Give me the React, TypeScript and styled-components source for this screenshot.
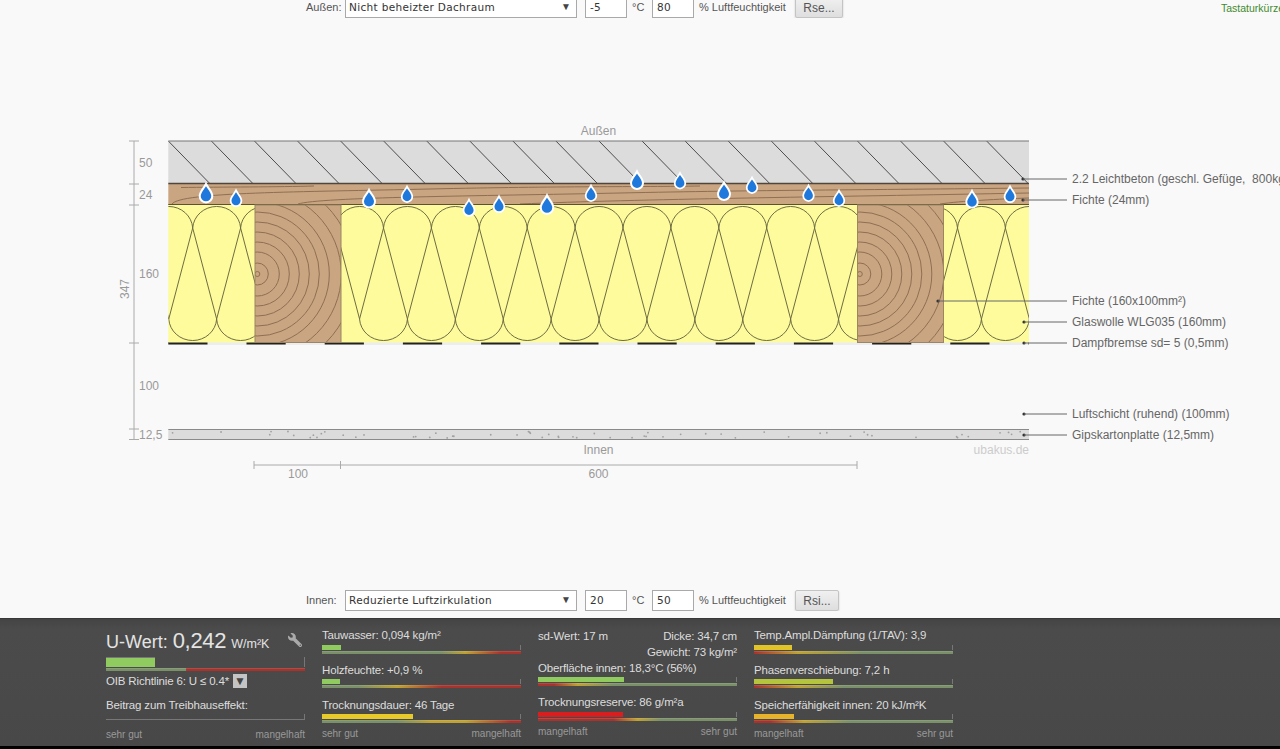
import React from 'react';
import styled, { createGlobalStyle } from 'styled-components';
import { FaWrench } from 'react-icons/fa';

const GlobalStyle = createGlobalStyle`
  html, body { margin: 0; padding: 0; background: #f9f9f9; overflow: hidden; }
  body { font-family: "Liberation Sans", Arial, sans-serif; }
`;

const Page = styled.div`
  width: 1280px;
  height: 749px;
  display: flex;
  flex-direction: column;
  overflow: hidden;
  background: #f9f9f9;
`;

const Toolbar = styled.div<{ $height: number }>`
  height: ${(p) => p.$height}px;
  flex: none;
  display: flex;
  align-items: flex-end;
  padding-left: 306px;
  overflow: hidden;
  font-size: 11px;
  color: #555;
  white-space: nowrap;
`;

const FieldLabel = styled.span`
  width: 39px;
  line-height: 18px;
  margin-bottom: 2px;
`;

const SelectWrap = styled.div`
  position: relative;
  flex: none;
  width: 232px;
  height: 21px;
  margin-right: 8px;
  &::after {
    content: '▼';
    position: absolute;
    right: 6px;
    top: 4px;
    font-size: 10px;
    color: #444;
    pointer-events: none;
  }
`;

const Select = styled.select`
  appearance: none;
  box-sizing: border-box;
  width: 100%;
  height: 100%;
  padding: 0 0 2px 3px;
  border: 1px solid #a9a9a9;
  border-radius: 0;
  background: #fff;
  font-family: "DejaVu Sans", sans-serif;
  font-size: 10.5px;
  letter-spacing: 0.33px;
  color: #333;
  outline: none;
`;

const NumberInput = styled.input`
  box-sizing: border-box;
  flex: none;
  width: 42px;
  height: 21px;
  padding: 0 0 2px 4px;
  border: 1px solid #a9a9a9;
  background: #fff;
  font-family: "DejaVu Sans", sans-serif;
  font-size: 10.5px;
  letter-spacing: 0.33px;
  color: #333;
  outline: none;
`;

const Unit = styled.span<{ $width: number }>`
  width: ${(p) => p.$width}px;
  padding-left: 5px;
  margin-bottom: 2px;
  box-sizing: border-box;
  line-height: 18px;
`;

const ResistanceButton = styled.button<{ $width: number }>`
  box-sizing: border-box;
  flex: none;
  width: ${(p) => p.$width}px;
  height: 21px;
  padding: 0;
  border: 1px solid #c4c4c4;
  border-radius: 2px;
  background: linear-gradient(#f0f0f0, #dedede);
  box-shadow: 0 1px 2px rgba(0, 0, 0, 0.2);
  font-family: "Liberation Sans", sans-serif;
  font-size: 12px;
  color: #555;
`;

const Shortcuts = styled.span`
  margin-left: auto;
  margin-right: -13px;
  width: 72px;
  line-height: 16px;
  margin-bottom: 2px;
  color: #3f8a2e;
  font-size: 10.5px;
`;

const Drawing = styled.svg`
  display: block;
  flex: none;
`;

const DimText = styled.text`
  font-size: 12px;
  fill: #999;
`;

const LayerText = styled.text`
  font-size: 12px;
  fill: #666;
  white-space: pre;
`;

const Spacer = styled.div`
  height: 7px;
  flex: none;
`;

const Panel = styled.div`
  box-sizing: border-box;
  height: 128px;
  flex: none;
  padding: 0 0 0 106px;
  display: grid;
  grid-template-columns: repeat(4, 199px);
  column-gap: 17px;
  background: linear-gradient(#444 0, #4b4b4b 10px, #484848 100%);
  border-top: 1px solid #383838;
  color: #ddd;
  font-size: 11.5px;
  letter-spacing: -0.16px;
`;

const Footer = styled.div`
  height: 3px;
  flex: none;
  background: #000;
`;

const Column = styled.div`
  display: flex;
  flex-direction: column;
  height: 127px;
  padding-top: 9px;
  box-sizing: border-box;
`;

const Metric = styled.div`
  display: flex;
  flex-direction: column;
  flex: none;
  height: 34.75px;
`;

const Caption = styled.div`
  height: 14px;
  line-height: 14px;
  white-space: nowrap;
`;

const Meter = styled.div`
  margin-top: 2.5px;
  box-sizing: border-box;
  border-right: 1px solid #777;
  height: 5px;
  display: flex;
  flex-direction: column;
  justify-content: flex-end;
`;

const Fill = styled.div<{ $color: string }>`
  height: 5px;
  background: ${(p) => p.$color};
`;

const Scale = styled.div<{ $stops: string }>`
  height: 3px;
  margin-top: 1px;
  background: linear-gradient(to right, ${(p) => p.$stops});
  border-top: 1px solid rgba(255, 255, 255, 0.12);
  box-sizing: border-box;
`;

const ScaleEnds = styled.div<{ $pull?: number }>`
  display: flex;
  justify-content: space-between;
  flex: none;
  margin-top: ${(p) => (p.$pull === undefined ? 'auto' : `${p.$pull}px`)};
  margin-bottom: 5px;
  font-size: 10px;
  line-height: 12px;
  letter-spacing: 0;
  color: #999;
`;

const UHeading = styled.div`
  display: flex;
  align-items: baseline;
  flex: none;
  height: 24px;
  font-size: 18px;
  letter-spacing: 0;
  color: #e4e4e4;
  white-space: nowrap;
`;

const UValue = styled.span`
  font-size: 22px;
  letter-spacing: -0.3px;
  margin-left: 5px;
`;

const UUnit = styled.span`
  font-size: 12.5px;
  margin-left: 5px;
`;

const WrenchButton = styled.span`
  margin-left: auto;
  margin-right: 3px;
  color: #aaa;
  align-self: center;
  display: flex;
  transform: scaleX(-1);
`;

const UMeter = styled(Meter)`
  height: 10px;
  margin-top: 5px;
`;

const UFill = styled(Fill)`
  height: 10px;
  border-top: 1px solid #777;
  box-sizing: border-box;
`;

const NormRow = styled.div`
  display: flex;
  align-items: center;
  gap: 4px;
  height: 16px;
  margin-top: 2px;
`;

const NormToggle = styled.span`
  width: 14px;
  height: 14px;
  background: #c4c4c4;
  color: #444;
  font-size: 12px;
  line-height: 14px;
  text-align: center;
`;

const Greenhouse = styled.div`
  margin-top: 10px;
`;

const EmptyMeter = styled.div`
  margin-top: 3px;
  height: 5px;
  border-right: 1px solid #777;
  border-bottom: 1px solid #777;
`;

const StatsTop = styled.div`
  height: 32.5px;
  flex: none;
  display: flex;
  justify-content: space-between;
  line-height: 16px;
`;

const StatsRight = styled.div`
  text-align: right;
`;

type MetricData = { label: string; value: number; color: string; stops: string };

const GOOD = '#7a9068';
const BAD = '#a8322c';
const MID = '#bfa232';

const colTwo: MetricData[] = [
  { label: 'Tauwasser: 0,094 kg/m²', value: 9.5, color: '#8fcb5e', stops: `${GOOD} 0%, ${GOOD} 60%, ${MID} 72%, ${BAD} 90%, ${BAD} 100%` },
  { label: 'Holzfeuchte: +0,9 %', value: 9, color: '#8fcb5e', stops: `${GOOD} 0%, ${GOOD} 18%, ${MID} 38%, ${BAD} 60%, ${BAD} 100%` },
  { label: 'Trocknungsdauer: 46 Tage', value: 46, color: '#e8c92a', stops: `${GOOD} 0%, ${GOOD} 38%, ${MID} 55%, ${MID} 72%, ${BAD} 95%` },
];

const colThree: MetricData[] = [
  { label: 'Oberfläche innen: 18,3°C (56%)', value: 43.5, color: '#8fcb5e', stops: `${BAD} 0%, ${BAD} 8%, ${MID} 20%, ${GOOD} 38%, ${GOOD} 100%` },
  { label: 'Trocknungsreserve: 86 g/m²a', value: 43, color: '#d81e1e', stops: `${BAD} 0%, ${BAD} 38%, ${MID} 50%, ${GOOD} 62%, ${GOOD} 100%` },
];

const colFour: MetricData[] = [
  { label: 'Temp.Ampl.Dämpfung (1/TAV): 3,9', value: 19, color: '#e0c428', stops: `${BAD} 0%, ${MID} 22%, ${GOOD} 55%, ${GOOD} 100%` },
  { label: 'Phasenverschiebung: 7,2 h', value: 40, color: '#b4c43c', stops: `${BAD} 0%, ${MID} 22%, ${GOOD} 45%, ${GOOD} 100%` },
  { label: 'Speicherfähigkeit innen: 20 kJ/m²K', value: 20, color: '#e6b32a', stops: `${BAD} 0%, ${BAD} 8%, ${MID} 25%, ${GOOD} 48%, ${GOOD} 100%` },
];

const MetricRow = ({ m }: { m: MetricData }) => (
  <Metric>
    <Caption>{m.label}</Caption>
    <Meter>
      <Fill $color={m.color} style={{ width: `${m.value}%` }} />
    </Meter>
    <Scale $stops={m.stops} />
  </Metric>
);

// drawing coordinates
const LEFT = 168.3;
const RIGHT = 1029;
const WOOD = '#c9a582';
const GRAIN = '#8f6f52';

const hatchLines = Array.from({ length: 20 }, (_, i) => LEFT + 43.07 * i);

const woolPath = (firstTopCrossing: number, count: number) => {
  // firstTopCrossing: x where two upper lobes meet
  const step = 47.9;
  const topY = 228;
  const botY = 319;
  let d = '';
  for (let i = -1; i < count; i++) {
    const a = firstTopCrossing + step * i;
    const b = a + step;
    d += `M${a},${topY} A24,23 0 0 1 ${b},${topY} `;
    d += `M${a + step / 2},${botY} A24,23 0 0 0 ${b + step / 2},${botY} `;
    d += `M${a},${topY} L${a + step / 2},${botY} L${b},${topY} `;
  }
  return d;
};

const ringRadii = [11, 22, 32, 42, 52, 62, 72, 84, 97, 110];

const Rings = ({ cx }: { cx: number }) => (
  <g fill="none" stroke={GRAIN} strokeWidth="1">
    <circle cx={cx} cy={274} r={2.5} />
    {ringRadii.map((r) => (
      <circle key={r} cx={cx} cy={274} r={r} />
    ))}
  </g>
);

const grainLines = [
  'M181,187.5 C220,187 280,187 314,186',
  'M172,204 C180,192 300,192 430,189 C560,186 640,187 700,186',
  'M298,204 C320,197 480,196 620,193 C760,190 860,190 1029,188',
  'M520,204 C640,199 820,197 1029,193',
  'M940,204 C960,201 1000,199 1029,198',
];

const drops: [number, number, number][] = [
  [206, 194, 1.05], [236, 199, 0.9], [369, 199.5, 1], [407, 195, 0.88],
  [469, 208.5, 0.92], [499, 205, 0.9], [547, 205.5, 1.05], [591, 194, 0.88],
  [637, 181, 1], [680, 181.5, 0.88], [724, 192, 1], [752, 186, 0.88],
  [808.5, 194, 0.88], [839, 199, 0.88], [972, 200, 0.95], [1010, 195, 0.9],
];

const Drop = ({ x, y, s }: { x: number; y: number; s: number }) => (
  <g transform={`translate(${x} ${y}) scale(${s})`}>
    <path
      d="M0,-9.5 C1.5,-6 6,-2.5 6,2 A6,6 0 1 1 -6,2 C-6,-2.5 -1.5,-6 0,-9.5 Z"
      fill="#1f78dc"
      stroke="#fff"
      strokeWidth="2"
    />
  </g>
);

const hash = (n: number) => {
  const v = Math.sin(n * 12.9898) * 43758.5453;
  return v - Math.floor(v);
};

const speckles = Array.from({ length: 60 }, (_, i) => ({
  x: LEFT + 4 + hash(i + 1) * 852,
  y: 431.5 + hash(i + 101) * 6.5,
}));

const labels: { text: string; y: number; dotX: number }[] = [
  { text: '2.2 Leichtbeton (geschl. Gefüge,  800kg/m³)', y: 179, dotX: 1023 },
  { text: 'Fichte (24mm)', y: 200, dotX: 1023 },
  { text: 'Fichte (160x100mm²)', y: 301, dotX: 938 },
  { text: 'Glaswolle WLG035 (160mm)', y: 322, dotX: 1024 },
  { text: 'Dampfbremse sd= 5 (0,5mm)', y: 343, dotX: 1024 },
  { text: 'Luftschicht (ruhend) (100mm)', y: 414, dotX: 1024 },
  { text: 'Gipskartonplatte (12,5mm)', y: 435, dotX: 1024 },
];

const leftDims: [string, number][] = [
  ['50', 167], ['24', 199], ['160', 278], ['100', 390], ['12,5', 439],
];

const Construction = () => (
  <Drawing width="1280" height="572" viewBox="0 18 1280 572">
    <defs>
      <clipPath id="concrete">
        <rect x={LEFT} y={141} width={RIGHT - LEFT} height={43} />
      </clipPath>
      <clipPath id="plank">
        <rect x={LEFT} y={184} width={RIGHT - LEFT} height={21} />
      </clipPath>
      <clipPath id="wool1"><rect x={LEFT} y={205} width={87} height={138} /></clipPath>
      <clipPath id="wool2"><rect x={341} y={205} width={517} height={138} /></clipPath>
      <clipPath id="wool3"><rect x={943} y={205} width={86} height={138} /></clipPath>
      <clipPath id="stud1"><rect x={255} y={205} width={86} height={138} /></clipPath>
      <clipPath id="stud2"><rect x={857.5} y={205} width={86} height={138} /></clipPath>
    </defs>

    {/* concrete */}
    <rect x={LEFT} y={141} width={RIGHT - LEFT} height={43} fill="#dcdcdc" />
    <g clipPath="url(#concrete)" stroke="#4c4c4c" strokeWidth="1">
      {hatchLines.map((x) => (
        <line key={x} x1={x} y1={141} x2={x + 42} y2={184} />
      ))}
    </g>
    <line x1={LEFT} y1={141} x2={RIGHT} y2={141} stroke="#777" strokeWidth="1.2" />

    {/* plank */}
    <rect x={LEFT} y={184} width={RIGHT - LEFT} height={21} fill={WOOD} />
    <g clipPath="url(#plank)" fill="none" stroke={GRAIN} strokeWidth="1">
      {grainLines.map((d) => (
        <path key={d} d={d} />
      ))}
    </g>
    <line x1={LEFT} y1={183.5} x2={RIGHT} y2={183.5} stroke="#4f463c" strokeWidth="1.5" />
    <line x1={LEFT} y1={204.5} x2={RIGHT} y2={204.5} stroke="#5c5036" strokeWidth="1" />

    {/* vapour barrier */}
    <rect x={LEFT} y={342} width={RIGHT - LEFT} height={3} fill="#ecedf2" />
    <line x1={LEFT} y1={343.3} x2={RIGHT} y2={343.3} stroke="#222" strokeWidth="2.4" strokeDasharray="39.2 39" />

    {/* insulation */}
    <rect x={LEFT} y={205} width={RIGHT - LEFT} height={137.5} fill="#fdfb9c" />
    <g fill="none" stroke="#6f6c42" strokeWidth="1">
      <path clipPath="url(#wool1)" d={woolPath(192.7, 3)} />
      <path clipPath="url(#wool2)" d={woolPath(383.5, 11)} />
      <path clipPath="url(#wool3)" d={woolPath(957.5, 3)} />
    </g>

    {/* studs */}
    {[255, 857.5].map((x, i) => (
      <g key={x}>
        <rect x={x} y={205} width={86} height={137.5} fill={WOOD} />
        <g clipPath={`url(#stud${i + 1})`}>
          <Rings cx={x + 2.3} />
        </g>
        <rect x={x} y={205} width={86} height={137.5} fill="none" stroke="#9c8660" strokeWidth="1" />
      </g>
    ))}

    {drops.map(([x, y, s]) => (
      <Drop key={`${x}-${y}`} x={x} y={y} s={s} />
    ))}

    {/* plasterboard */}
    <rect x={LEFT} y={429.5} width={RIGHT - LEFT} height={10} fill="#dcdcdc" />
    <line x1={LEFT} y1={429.5} x2={RIGHT} y2={429.5} stroke="#8a8a8a" />
    <line x1={LEFT} y1={439.5} x2={RIGHT} y2={439.5} stroke="#8a8a8a" />
    {speckles.map((p) => (
      <circle key={`${p.x}`} cx={p.x} cy={p.y} r={0.9} fill="#a0a0a0" />
    ))}

    {/* dimensions */}
    <g stroke="#aaa" strokeWidth="1">
      <line x1={134} y1={141} x2={134} y2={439.5} />
      {[141, 184, 205, 343, 429, 439.5].map((y) => (
        <line key={y} x1={129} y1={y} x2={139} y2={y} />
      ))}
      <line x1={254} y1={465} x2={857} y2={465} />
      {[254, 340.5, 857].map((x) => (
        <line key={x} x1={x} y1={461} x2={x} y2={469} />
      ))}
    </g>
    {leftDims.map(([t, y]) => (
      <DimText key={t} x={139} y={y}>{t}</DimText>
    ))}
    <DimText x={129} y={289} transform="rotate(-90 129 289)" textAnchor="middle">347</DimText>
    <DimText x={298} y={478} textAnchor="middle">100</DimText>
    <DimText x={598.5} y={478} textAnchor="middle">600</DimText>
    <DimText x={598.5} y={135} textAnchor="middle">Außen</DimText>
    <DimText x={598.5} y={454} textAnchor="middle">Innen</DimText>
    <DimText x={1029} y={454} textAnchor="end" style={{ fill: '#ccc' }}>ubakus.de</DimText>

    {/* layer labels */}
    {labels.map((l) => (
      <g key={l.text}>
        <circle cx={l.dotX} cy={l.y} r={1.6} fill="#333" />
        <line x1={l.dotX} y1={l.y} x2={1067} y2={l.y} stroke="#666" />
        <LayerText x={1072} y={l.y + 4}>{l.text}</LayerText>
      </g>
    ))}
  </Drawing>
);

const App = () => (
  <Page>
    <GlobalStyle />
    <Toolbar $height={18}>
      <FieldLabel>Außen:</FieldLabel>
      <SelectWrap>
        <Select defaultValue="Nicht beheizter Dachraum">
          <option>Nicht beheizter Dachraum</option>
        </Select>
      </SelectWrap>
      <NumberInput defaultValue="-5" />
      <Unit $width={25}>°C</Unit>
      <NumberInput defaultValue="80" />
      <Unit $width={101}>% Luftfeuchtigkeit</Unit>
      <ResistanceButton $width={48}>Rse...</ResistanceButton>
      <Shortcuts>Tastaturkürzel</Shortcuts>
    </Toolbar>

    <Construction />

    <Toolbar $height={21}>
      <FieldLabel>Innen:</FieldLabel>
      <SelectWrap>
        <Select defaultValue="Reduzierte Luftzirkulation">
          <option>Reduzierte Luftzirkulation</option>
        </Select>
      </SelectWrap>
      <NumberInput defaultValue="20" />
      <Unit $width={25}>°C</Unit>
      <NumberInput defaultValue="50" />
      <Unit $width={101}>% Luftfeuchtigkeit</Unit>
      <ResistanceButton $width={44}>Rsi...</ResistanceButton>
    </Toolbar>
    <Spacer />

    <Panel>
      <Column>
        <UHeading>
          U-Wert:<UValue>0,242</UValue><UUnit>W/m²K</UUnit>
          <WrenchButton><FaWrench size={14} /></WrenchButton>
        </UHeading>
        <UMeter>
          <UFill $color="#8fcb5e" style={{ width: '24.5%' }} />
        </UMeter>
        <Scale $stops={`${GOOD} 0%, ${GOOD} 40%, ${BAD} 40.5%, ${BAD} 100%`} />
        <NormRow>
          OIB Richtlinie 6: U ≤ 0.4*
          <NormToggle>▼</NormToggle>
        </NormRow>
        <Greenhouse>Beitrag zum Treibhauseffekt:</Greenhouse>
        <EmptyMeter />
        <ScaleEnds><span>sehr gut</span><span>mangelhaft</span></ScaleEnds>
      </Column>

      <Column>
        {colTwo.map((m) => <MetricRow key={m.label} m={m} />)}
        <ScaleEnds $pull={-4.25}><span>sehr gut</span><span>mangelhaft</span></ScaleEnds>
      </Column>

      <Column>
        <StatsTop>
          <span>sd-Wert: 17 m</span>
          <StatsRight>Dicke: 34,7 cm<br />Gewicht: 73 kg/m²</StatsRight>
        </StatsTop>
        {colThree.map((m) => <MetricRow key={m.label} m={m} />)}
        <ScaleEnds $pull={-4}><span>mangelhaft</span><span>sehr gut</span></ScaleEnds>
      </Column>

      <Column>
        {colFour.map((m) => <MetricRow key={m.label} m={m} />)}
        <ScaleEnds $pull={-4.25}><span>mangelhaft</span><span>sehr gut</span></ScaleEnds>
      </Column>
    </Panel>
    <Footer />
  </Page>
);

export default App;
